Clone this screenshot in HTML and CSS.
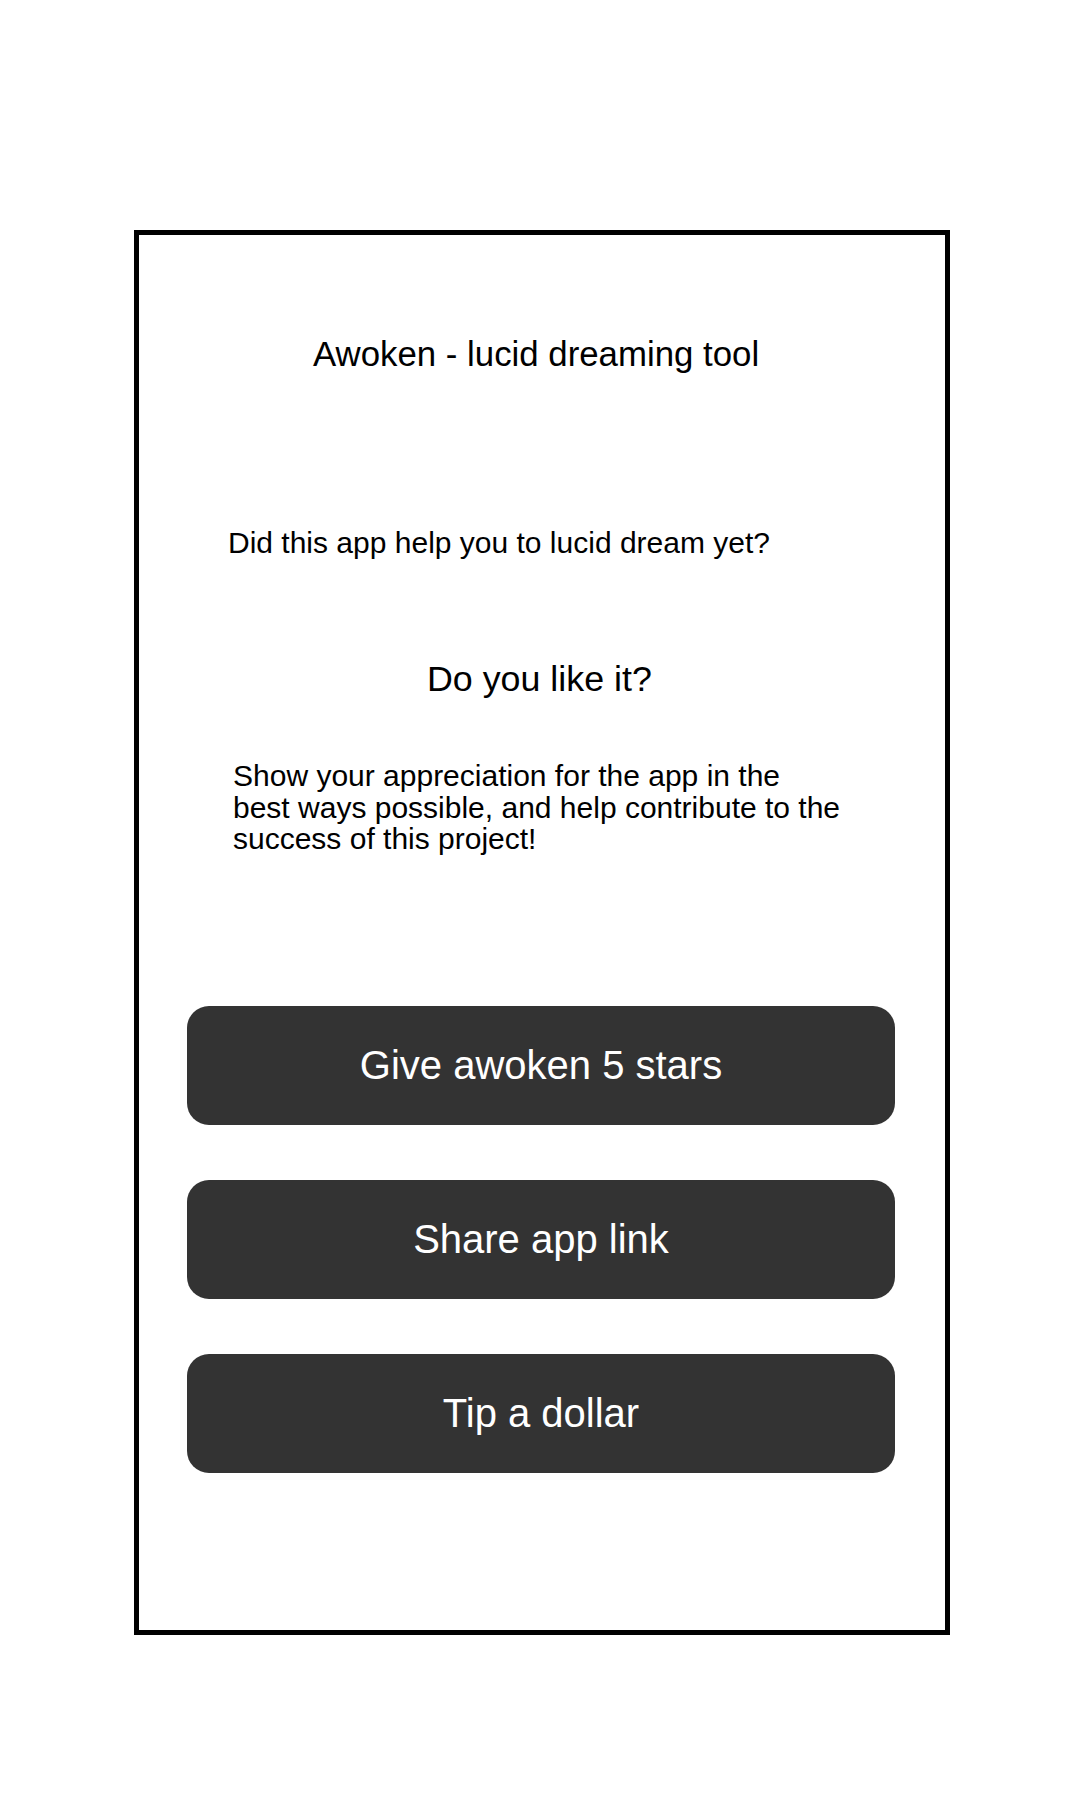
FILE: index.html
```html
<!DOCTYPE html>
<html lang="en">
<head>
<meta charset="utf-8">
<title>Awoken - lucid dreaming tool</title>
<link rel="stylesheet" href="styles.css">
</head>
<body>
<main class="frame">
  <h1 class="title">Awoken - lucid dreaming tool</h1>
  <p class="question">Did this app help you to lucid dream yet?</p>
  <h2 class="like">Do you like it?</h2>
  <p class="appreciation">Show your appreciation for the app in the best ways possible, and help contribute to the success of this project!</p>
  <div class="actions">
    <button class="btn" type="button">Give awoken 5 stars</button>
    <button class="btn" type="button">Share app link</button>
    <button class="btn" type="button">Tip a dollar</button>
  </div>
</main>
</body>
</html>
```
FILE: styles.css
```css
html, body {
  margin: 0;
  padding: 0;
  background: #ffffff;
}
body {
  width: 1080px;
  min-height: 1800px;
  font-family: "Liberation Sans", Arial, sans-serif;
  color: #000;
  padding-top: 230px;
  box-sizing: border-box;
}
.frame {
  box-sizing: border-box;
  margin-left: 134px;
  width: 816px;
  height: 1405px;
  border: 5px solid #000;
  display: flex;
  flex-direction: column;
  align-items: flex-start;
}
.title {
  margin: 99px 0 0 174px;
  font-size: 34.8px;
  font-weight: normal;
  line-height: 40px;
}
.question {
  margin: 152px 0 0 89px;
  font-size: 30px;
  line-height: 34px;
}
.like {
  margin: 99px 0 0 288px;
  font-size: 35.8px;
  font-weight: normal;
  line-height: 40px;
}
.appreciation {
  margin: 61px 0 0 94px;
  width: 609px;
  font-size: 30px;
  line-height: 31.5px;
}
.actions {
  margin: 151px 0 0 48px;
  display: flex;
  flex-direction: column;
  gap: 55px;
}
.btn {
  width: 708px;
  height: 119px;
  border: none;
  border-radius: 22px;
  background: #333333;
  color: #ffffff;
  font-family: "Liberation Sans", Arial, sans-serif;
  font-size: 40px;
  padding: 0;
  cursor: pointer;
}
```
